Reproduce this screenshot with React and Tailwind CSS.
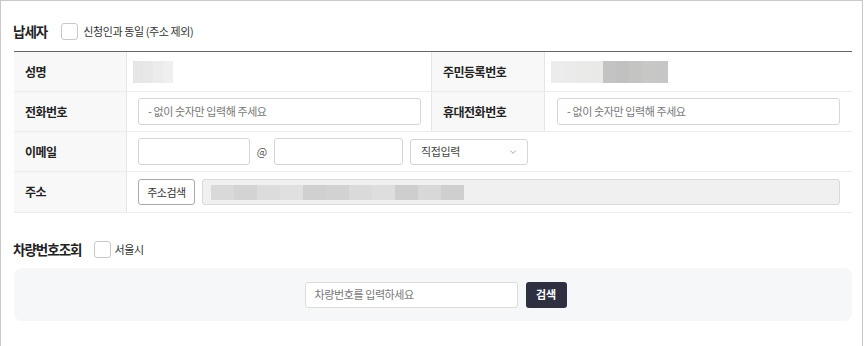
import { ChevronDown } from 'lucide-react';

const font = { fontFamily: '"Noto Sans CJK KR", "Noto Sans", sans-serif' };

const Checkbox = () => (
  <span className="inline-block w-[17px] h-[17px] rounded-[3px] border border-[#c8c8c8] bg-white" />
);

const Label = ({ children }) => (
  <div className="flex items-center bg-[#f8f8f8] pl-[11px] text-[12px] font-bold tracking-[-0.5px] text-[#222] border-r border-[#e6e6e6]">
    {children}
  </div>
);

const Blur = ({ shades, w = 12 }) => (
  <div className="flex">
    {shades.map((c, i) => (
      <div key={i} className="h-[22px]" style={{ width: w, backgroundColor: c }} />
    ))}
  </div>
);

const TextInput = ({ className = '', placeholder }) => (
  <div className={`h-[27px] flex items-center rounded-[3px] border border-[#d6d6d6] bg-white px-[9px] text-[11px] tracking-[-0.4px] text-[#777] whitespace-pre ${className}`}>
    {placeholder}
  </div>
);

const App = () => {
  return (
    <div className="w-[863px] h-[346px] border-x border-t border-[#c9c9c9] bg-white pl-3 pr-[10px] pt-[20px] text-[#222]" style={font}>
      {/* 납세자 */}
      <div className="flex items-center h-[20px]">
        <span className="text-[13.5px] font-bold tracking-[-1px]">납세자</span>
        <span className="ml-[14px] flex items-center">
          <Checkbox />
          <span className="ml-[5px] text-[11px] tracking-[-0.4px] text-[#333]">신청인과 동일 (주소 제외)</span>
        </span>
      </div>

      <div className="mt-[10px] ml-px border-t border-[#666]">
        <div className="grid grid-cols-[113px_305px_113px_1fr] h-10 border-b border-[#ececec]">
          <Label>성명</Label>
          <div className="flex items-center pl-[6px] border-r border-[#e6e6e6]">
            <Blur shades={['#e6e6e6', '#e8e8e8', '#ececec', '#eeefee']} w={10} />
          </div>
          <Label>주민등록번호</Label>
          <div className="flex items-center pl-[6px]">
            <Blur shades={['#ececec', '#ebebeb', '#eaeae9', '#e9e9e8', '#c3c3c3', '#c1c1c1', '#c4c4c3', '#c7c7c6', '#c6c6c6']} w={13} />
          </div>
        </div>

        <div className="grid grid-cols-[113px_305px_113px_1fr] h-10 border-b border-[#ececec]">
          <Label>전화번호</Label>
          <div className="flex items-center pl-[11px] pr-[10px] border-r border-[#e6e6e6]">
            <TextInput className="w-full" placeholder="- 없이 숫자만 입력해 주세요" />
          </div>
          <Label>휴대전화번호</Label>
          <div className="flex items-center pl-[12px] pr-[12px]">
            <TextInput className="w-full" placeholder="- 없이 숫자만 입력해 주세요" />
          </div>
        </div>

        <div className="grid grid-cols-[113px_1fr] h-10 border-b border-[#ececec]">
          <Label>이메일</Label>
          <div className="flex items-center pl-[11px]">
            <TextInput className="w-[112px] h-[26px]" />
            <span className="mx-[6px] w-[12px] text-center text-[11px] text-[#555]">@</span>
            <TextInput className="w-[129px] h-[26px]" />
            <div className="ml-[7px] w-[118px] h-[26px] flex items-center justify-between rounded-[3px] border border-[#d6d6d6] bg-white pl-[10px] pr-[9px] text-[11px] tracking-[-0.4px] text-[#444]">
              직접입력
              <ChevronDown size={10} strokeWidth={1.5} className="text-[#777]" />
            </div>
          </div>
        </div>

        <div className="grid grid-cols-[113px_1fr] h-[41px] border-b border-[#ececec]">
          <Label>주소</Label>
          <div className="flex items-center pl-[11px] pr-[12px]">
            <button className="h-[26px] w-[57px] rounded-[3px] border border-[#a9a9a9] bg-white text-[11px] tracking-[-0.5px] text-[#333]">주소검색</button>
            <div className="ml-[7px] flex-1 h-[26px] flex items-center rounded-[3px] border border-[#d9d9d9] bg-[#f0f0f0] pl-[8px]">
              <div className="flex h-[15px]">
                {['#d9d9d9', '#d3d3d3', '#dcdcdc', '#e0e0e0', '#d0d0d0', '#d2d2d2', '#dadada', '#dedede', '#cecece', '#d8d8d8', '#cfcfcf'].map((c, i) => (
                  <div key={i} className="w-[23px] h-full" style={{ backgroundColor: c }} />
                ))}
              </div>
            </div>
          </div>
        </div>
      </div>

      {/* 차량번호조회 */}
      <div className="mt-[27px] flex items-center h-[18px]">
        <span className="text-[13.5px] font-bold tracking-[-1px]">차량번호조회</span>
        <span className="ml-[12px] flex items-center">
          <Checkbox />
          <span className="ml-[4px] text-[11px] tracking-[-0.4px] text-[#333]">서울시</span>
        </span>
      </div>

      <div className="mt-[10px] ml-px h-[53px] rounded-[8px] bg-[#f6f7f9] flex items-center justify-center gap-[8px] pl-[5px]">
        <div className="w-[213px] h-[26px] flex items-center rounded-[3px] border border-[#dcdcdc] bg-white px-[9px] text-[11px] tracking-[-0.4px] text-[#777]">
          차량번호를 입력하세요
        </div>
        <button className="w-[41px] h-[26px] rounded-[3px] bg-[#2e3042] text-[11px] font-bold text-white">검색</button>
      </div>
    </div>
  );
};

export default App;
